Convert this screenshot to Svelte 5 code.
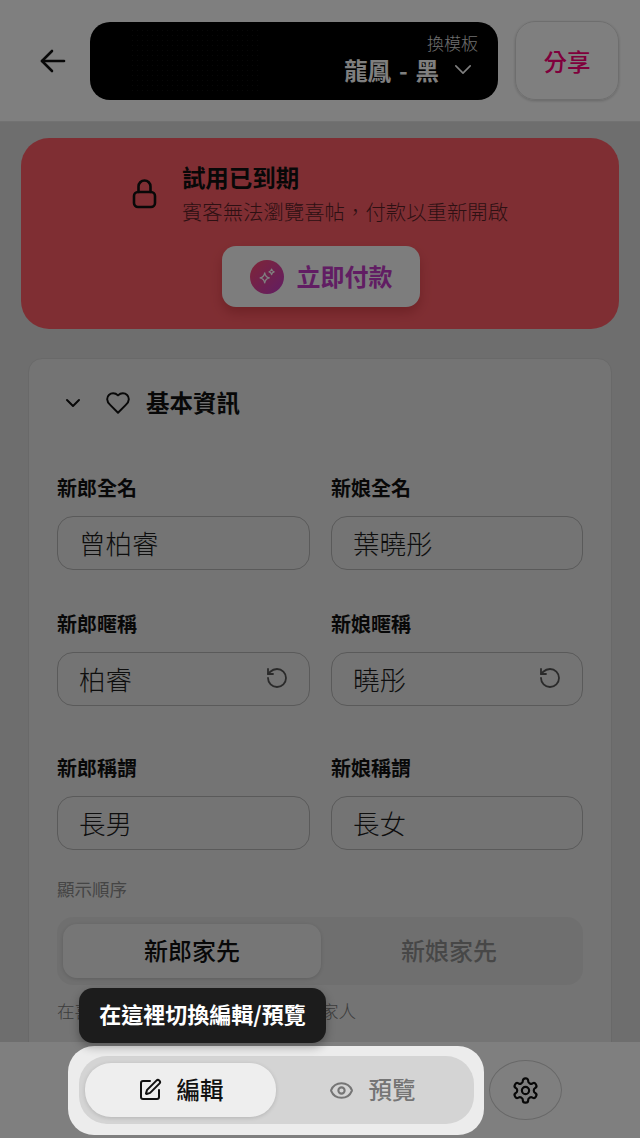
<script>
	const rows = [
		{ left: '新郎全名', right: '新娘全名', lv: '曾柏睿', rv: '葉曉彤', reset: false },
		{ left: '新郎暱稱', right: '新娘暱稱', lv: '柏睿', rv: '曉彤', reset: true },
		{ left: '新郎稱謂', right: '新娘稱謂', lv: '長男', rv: '長女', reset: false }
	];
</script>

<div class="screen">
	<header class="topbar">
		<button class="back" aria-label="返回">
			<svg viewBox="0 0 26 24" width="26" height="24" fill="none" stroke="currentColor" stroke-width="2.6" stroke-linecap="round" stroke-linejoin="round">
				<path d="M12 2 2 12l10 10" /><path d="M2 12h22" />
			</svg>
		</button>
		<div class="template">
			<div class="texture"></div>
			<div class="template-text">
				<span class="swap">換模板</span>
				<span class="name">龍鳳 - 黑
					<svg viewBox="0 0 20 12" width="18" height="11" fill="none" stroke="currentColor" stroke-width="1.8" stroke-linecap="round" stroke-linejoin="round"><path d="m2 2 8 8 8-8" /></svg>
				</span>
			</div>
		</div>
		<button class="share">分享</button>
	</header>

	<main class="content">
		<section class="banner">
			<div class="notice">
				<svg viewBox="0 0 25 31" width="25" height="31" fill="none" stroke="currentColor" stroke-width="2.6" stroke-linecap="round" stroke-linejoin="round">
					<rect x="2" y="14" width="21" height="15" rx="4" /><path d="M6.5 14V8.5a6 6 0 0 1 12 0V14" />
				</svg>
				<div>
					<h2>試用已到期</h2>
					<p>賓客無法瀏覽喜帖&#65292;付款以重新開啟</p>
				</div>
			</div>
			<button class="pay">
				<span class="spark">
					<svg viewBox="0 0 24 24" width="22" height="22" fill="none" stroke="#fff" stroke-width="1.4" stroke-linejoin="round">
						<path d="M9.5 7.5c.6 3.6 1.9 4.9 5 5.5-3.1.6-4.4 1.900-5 5.500-.6-3.600-1.900-4.900-5-5.500 3.100-.6 4.400-1.900 5-5.500Z" />
						<path d="M17 3.500c.3 1.900 1 2.600 2.800 3-1.800.4-2.500 1.100-2.800 3-.3-1.900-1-2.600-2.800-3 1.800-.4 2.500-1.100 2.800-3Z" />
					</svg>
				</span>
				<span class="pay-text">立即付款</span>
			</button>
		</section>

		<section class="card">
			<div class="card-head">
				<svg viewBox="0 0 16 10" width="16" height="10" fill="none" stroke="currentColor" stroke-width="2" stroke-linecap="round" stroke-linejoin="round"><path d="m2 2 6 6 6-6" /></svg>
				<svg class="heart" viewBox="0 0 24 24" width="26" height="26" fill="none" stroke="currentColor" stroke-width="1.8" stroke-linejoin="round"><path d="M19 14c1.490-1.460 3-3.210 3-5.500A5.500 5.500 0 0 0 16.500 3c-1.760 0-3 .5-4.500 2-1.500-1.500-2.740-2-4.500-2A5.500 5.500 0 0 0 2 8.500c0 2.300 1.500 4.050 3 5.500l7 7Z" /></svg>
				<h3>基本資訊</h3>
			</div>

			{#each rows as row}
				<div class="row" class:tight={row.reset}>
					{#each [[row.left, row.lv], [row.right, row.rv]] as [label, value]}
						<div class="field">
							<span class="label">{label}</span>
							<div class="input">
								<span>{value}</span>
								{#if row.reset}
									<svg viewBox="0 0 24 24" width="24" height="24" fill="none" stroke="currentColor" stroke-width="1.800" stroke-linecap="round" stroke-linejoin="round"><path d="M3 12a9 9 0 1 0 9-9 9.750 9.750 0 0 0-6.740 2.740L3 8" /><path d="M3 3v5h5" /></svg>
								{/if}
							</div>
						</div>
					{/each}
				</div>
			{/each}

			<div class="order-label">顯示順序</div>
			<div class="segment">
				<div class="seg active">新郎家先</div>
				<div class="seg">新娘家先</div>
			</div>
			<p class="hint">在喜帖與邀請卡上會優先顯示新郎家人</p>
		</section>
	</main>

	<footer class="bottombar">
		<div class="spotlight">
			<div class="tooltip">在這裡切換編輯/預覽</div>
			<div class="tabs">
				<button class="tab on">
					<svg viewBox="0 0 24 24" width="24" height="24" fill="none" stroke="currentColor" stroke-width="2" stroke-linecap="round" stroke-linejoin="round"><path d="M12 3H5a2 2 0 0 0-2 2v14a2 2 0 0 0 2 2h14a2 2 0 0 0 2-2v-7" /><path d="M18.375 2.625a1 1 0 0 1 3 3l-9.013 9.014a2 2 0 0 1-.853.505l-2.873.84a.5.5 0 0 1-.62-.62l.84-2.873a2 2 0 0 1 .506-.852z" /></svg>
					<span>編輯</span>
				</button>
				<button class="tab">
					<svg viewBox="0 0 24 24" width="25" height="25" fill="none" stroke="currentColor" stroke-width="2" stroke-linecap="round" stroke-linejoin="round"><path d="M2.062 12.348a1 1 0 0 1 0-.696 10.750 10.750 0 0 1 19.876 0 1 1 0 0 1 0 .696 10.750 10.750 0 0 1-19.876 0" /><circle cx="12" cy="12" r="3" /></svg>
					<span>預覽</span>
				</button>
			</div>
		</div>
		<button class="gear" aria-label="設定">
			<svg viewBox="0 0 24 24" width="29" height="29" fill="none" stroke="currentColor" stroke-width="1.800" stroke-linecap="round" stroke-linejoin="round"><path d="M12.220 2h-.44a2 2 0 0 0-2 2v.18a2 2 0 0 1-1 1.730l-.43.25a2 2 0 0 1-2 0l-.15-.08a2 2 0 0 0-2.730.73l-.22.38a2 2 0 0 0 .73 2.730l.15.1a2 2 0 0 1 1 1.720v.51a2 2 0 0 1-1 1.740l-.15.09a2 2 0 0 0-.73 2.730l.22.38a2 2 0 0 0 2.730.73l.15-.08a2 2 0 0 1 2 0l.43.25a2 2 0 0 1 1 1.730V20a2 2 0 0 0 2 2h.44a2 2 0 0 0 2-2v-.18a2 2 0 0 1 1-1.730l.43-.25a2 2 0 0 1 2 0l.15.08a2 2 0 0 0 2.730-.73l.22-.39a2 2 0 0 0-.73-2.730l-.15-.08a2 2 0 0 1-1-1.740v-.5a2 2 0 0 1 1-1.740l.15-.09a2 2 0 0 0 .73-2.730l-.22-.38a2 2 0 0 0-2.730-.73l-.15.08a2 2 0 0 1-2 0l-.43-.25a2 2 0 0 1-1-1.730V4a2 2 0 0 0-2-2z" /><circle cx="12" cy="12" r="3" /></svg>
		</button>
	</footer>
</div>

<style>
	:global(body) {
		margin: 0;
		background: #dcdcdc;
	}

	.screen {
		width: 640px;
		height: 1138px;
		overflow: hidden;
		display: flex;
		flex-direction: column;
		font-family: "Noto Sans CJK TC", "Noto Sans", sans-serif;
		color: #111;
		background: #dcdcdc;
	}

	button {
		font: inherit;
		border: none;
		background: none;
		padding: 0;
		color: inherit;
	}

	.topbar {
		flex: none;
		height: 122px;
		box-sizing: border-box;
		display: flex;
		align-items: center;
		padding: 0 21px 0 40px;
		background: #fff;
		border-bottom: 1px solid #e4e4e4;
	}

	.back {
		width: 50px;
		display: flex;
	}

	.template {
		position: relative;
		overflow: hidden;
		width: 408px;
		height: 78px;
		box-sizing: border-box;
		display: flex;
		justify-content: flex-end;
		align-items: center;
		padding: 0 20px 6px 0;
		background: #000;
		border-radius: 20px;
		color: #fff;
	}

	/* faint grain of the template's artwork */
	.texture {
		position: absolute;
		left: 40px;
		top: 6px;
		width: 130px;
		height: 66px;
		background-image: radial-gradient(#1e1e1e 0.8px, transparent 1px);
		background-size: 5px 5px;
		opacity: 0.6;
	}

	.template-text {
		position: relative;
		display: flex;
		flex-direction: column;
		align-items: flex-end;
	}

	.swap {
		font-size: 17px;
		line-height: 24px;
		font-weight: 300;
		color: #ddd;
	}

	.name {
		font-size: 23.500px;
		line-height: 30px;
		font-weight: 700;
		word-spacing: 2.500px;
		display: flex;
		align-items: center;
		gap: 15px;
		padding-right: 6px;
	}

	.share {
		margin-left: 17px;
		width: 104px;
		height: 79px;
		border: 1.5px solid #ddd;
		border-radius: 20px;
		box-sizing: border-box;
		box-shadow: 0 1px 3px rgba(0, 0, 0, 0.2);
		color: #ff0078;
		font-size: 23.500px;
		font-weight: 500;
	}

	.content {
		flex: 1;
		min-height: 0;
		overflow: hidden;
		padding: 16px 21px 0;
	}

	.banner {
		height: 191px;
		box-sizing: border-box;
		padding-top: 24px;
		background: #ff5d66;
		border-radius: 28px;
		display: flex;
		flex-direction: column;
		align-items: center;
	}

	.notice {
		display: flex;
		align-items: center;
		gap: 25px;
		color: #111;
	}

	.notice h2 {
		margin: 0;
		font-size: 23.500px;
		line-height: 30px;
		font-weight: 700;
	}

	.notice p {
		margin: 5px 0 0;
		font-size: 20.400px;
		line-height: 28px;
		font-weight: 300;
		color: #5a2126;
	}

	.pay {
		margin: 21px 0 0 2px;
		width: 198px;
		height: 61px;
		border-radius: 14px;
		background: #fafafa;
		display: flex;
		align-items: center;
		justify-content: center;
		gap: 13px;
		color: #c23bc6;
		font-size: 24px;
		font-weight: 700;
		box-shadow: 0 6px 12px rgba(120, 0, 0, 0.25);
	}

	.pay-text {
		margin-top: -2px;
	}

	.spark {
		width: 34px;
		height: 34px;
		border-radius: 50%;
		background: linear-gradient(135deg, #ff4a6e, #c23cc8);
		display: flex;
		align-items: center;
		justify-content: center;
	}

	.card {
		margin: 29px 7px 0;
		box-sizing: border-box;
		height: 760px;
		padding: 0 28px;
		background: #e8e8e8;
		border: 1px solid #d2d2d2;
		border-radius: 14px;
	}

	.card-head {
		height: 88px;
		display: flex;
		align-items: center;
		padding-left: 8px;
	}

	.heart {
		margin-left: 24px;
	}

	.card-head h3 {
		margin: -2px 0 0 15px;
		font-size: 23.500px;
		font-weight: 700;
	}

	.row {
		display: grid;
		grid-template-columns: 253px 252px;
		gap: 21px;
		margin-top: 27px;
	}

	.row + .row {
		margin-top: 40px;
	}

	.row.tight + .row {
		margin-top: 48px;
	}

	.field {
		display: flex;
		flex-direction: column;
		gap: 14px;
	}

	.label {
		font-size: 20px;
		line-height: 28px;
		font-weight: 700;
	}

	.input {
		height: 54px;
		box-sizing: border-box;
		display: flex;
		align-items: center;
		justify-content: space-between;
		padding: 0 20px 2px 21px;
		border: 1.500px solid #b4b4b4;
		border-radius: 16px;
		font-size: 26.500px;
		font-weight: 300;
		color: #1c1c1c;
	}

	.input svg {
		color: #555;
		flex: none;
	}

	.order-label {
		margin-top: 27px;
		font-size: 17.500px;
		line-height: 24px;
		color: #8a8a8a;
	}

	.segment {
		margin-top: 16px;
		height: 68px;
		box-sizing: border-box;
		padding: 7px 6px;
		display: grid;
		grid-template-columns: 258px 1fr;
		background: #dfdfdf;
		border-radius: 16px;
	}

	.seg {
		display: flex;
		align-items: center;
		justify-content: center;
		padding-bottom: 3px;
		font-size: 24px;
		font-weight: 500;
		color: #8f8f8f;
		border-radius: 14px;
	}

	.seg.active {
		background: #ededed;
		color: #111;
		box-shadow: 0 1px 4px rgba(0, 0, 0, 0.15);
	}

	.hint {
		margin: 13px 0 0;
		font-size: 17.600px;
		line-height: 26px;
		font-weight: 300;
		color: #777;
	}

	.bottombar {
		flex: none;
		position: relative;
		z-index: 1;
		height: 96px;
		box-sizing: border-box;
		padding: 4px 0 0 68px;
		display: flex;
		background: #fff;
	}

	.spotlight {
		position: relative;
		z-index: 2;
		width: 416px;
		height: 89px;
		box-sizing: border-box;
		padding: 10px 10px 11px 11px;
		background: #ececec;
		border-radius: 26px;
		box-shadow: 0 0 0 1400px rgba(0, 0, 0, 0.5);
	}

	.tooltip {
		position: absolute;
		left: 11px;
		top: -58px;
		width: 247px;
		height: 55px;
		box-sizing: border-box;
		padding-bottom: 5px;
		display: flex;
		align-items: center;
		justify-content: center;
		background: #1c1c1c;
		border-radius: 14px;
		color: #fff;
		font-size: 22px;
		font-weight: 700;
		box-shadow: 0 4px 10px rgba(0, 0, 0, 0.3);
	}

	.tabs {
		height: 68px;
		box-sizing: border-box;
		padding: 7px 6px;
		display: grid;
		grid-template-columns: 191px 1fr;
		background: #d4d4d4;
		border-radius: 28px;
	}

	.tab {
		display: flex;
		align-items: center;
		justify-content: center;
		gap: 15px;
		font-size: 23.500px;
		font-weight: 500;
		color: #757575;
		border-radius: 26px;
	}

	.tab span {
		margin-top: -2px;
	}

	.tab.on {
		background: #eeeeee;
		color: #111;
		box-shadow: 0 1px 4px rgba(0, 0, 0, 0.15);
	}

	.gear {
		margin: 14px 0 0 5px;
		width: 73px;
		height: 60px;
		border: 1.500px solid #d0d0d0;
		border-radius: 50%;
		box-sizing: border-box;
		display: flex;
		align-items: center;
		justify-content: center;
	}
</style>
